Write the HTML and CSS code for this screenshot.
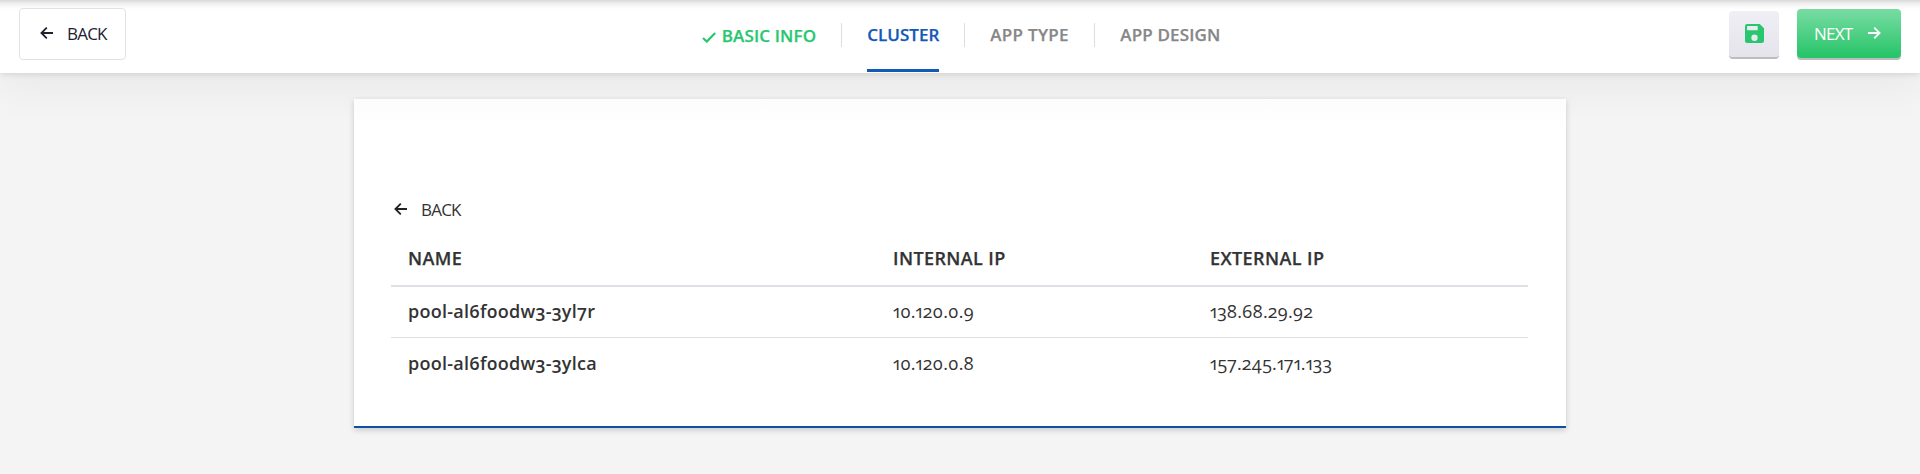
FILE: index.html
```html
<!DOCTYPE html>
<html lang="en">
<head>
<meta charset="utf-8">
<title>Cluster</title>
<link rel="stylesheet" href="styles.css">
</head>
<body>
<header class="topbar">
  <button class="btn btn-back"><svg class="arrow" viewBox="0 0 13 12"><path d="M13 6H1.5M6.800 .6L1.400 6l5.400 5.400"/></svg><span class="label">BACK</span></button>
  <nav class="steps">
    <a class="step done"><svg class="check" viewBox="0 0 14 11"><path d="M1 6l3.8 3.6L13.2 1"/></svg><span>BASIC INFO</span></a>
    <a class="step active"><span>CLUSTER</span></a>
    <a class="step type"><span>APP TYPE</span></a>
    <a class="step design"><span>APP DESIGN</span></a>
  </nav>
  <div class="actions">
    <button class="btn btn-save" aria-label="Save"><svg class="disk" viewBox="3 3 18 18"><path d="M17 3H5a2 2 0 0 0-2 2v14a2 2 0 0 0 2 2h14a2 2 0 0 0 2-2V7zm-5 16a3 3 0 1 1 0-6 3 3 0 0 1 0 6zm3-10H5V5h10z"/></svg></button>
    <button class="btn btn-next"><span class="label">NEXT</span><svg class="arrow" viewBox="0 0 13 12"><path d="M0 6h11.5M6.200 .6l5.400 5.400-5.400 5.400"/></svg></button>
  </div>
</header>
<main class="card">
  <a class="back-link"><svg class="arrow" viewBox="0 0 13 12"><path d="M13 6H1.5M6.800 .6L1.400 6l5.400 5.400"/></svg><span class="label">BACK</span></a>
  <table class="nodes">
    <colgroup><col class="col-name"><col class="col-internal"><col class="col-external"></colgroup>
    <thead><tr><th>NAME</th><th>INTERNAL IP</th><th>EXTERNAL IP</th></tr></thead>
    <tbody>
      <tr><td class="name">pool-al6f0odw3-3yl7r</td><td>10.120.0.9</td><td>138.68.29.92</td></tr>
      <tr><td class="name">pool-al6f0odw3-3ylca</td><td>10.120.0.8</td><td>157.245.171.133</td></tr>
    </tbody>
  </table>
</main>
</body>
</html>
```
FILE: styles.css
```css
* { box-sizing: border-box; }
body {
  margin: 0;
  height: 474px;
  overflow: hidden;
  background: #f4f4f4;
  color: #333;
  font-family: "Open Sans", "Noto Sans", sans-serif;
  font-size: 17px;
}
svg { display: block; fill: none; stroke: currentColor; stroke-width: 1.8; flex: none; }
.topbar {
  height: 73px;
  display: grid;
  grid-template-columns: 1fr auto 1fr;
  padding: 0 19px;
  background: linear-gradient(#d9d9d9, #f2f2f2 4px, #fff 9px);
  box-shadow: 0 1px 6px rgba(0, 0, 0, .12), 0 14px 44px rgba(0, 0, 0, .05);
}
.btn {
  display: flex;
  align-items: center;
  border: 0;
  border-radius: 4px;
  font: inherit;
  padding: 0;
}
.label { letter-spacing: -.8px; white-space: nowrap; line-height: 24px; }
.arrow { width: 13px; height: 12px; }
.btn-back {
  width: 107px;
  height: 52px;
  margin-top: 8px;
  padding: 0 0 0 20px;
  gap: 14px;
  border: 1px solid #e2e2e2;
  background: #fff;
  color: #212130;
}
.btn-back .arrow { margin-bottom: 2px; }
.steps { display: flex; height: 73px; padding-left: 2px; font-weight: 600; color: #878787; -webkit-text-stroke: .25px; }
.step {
  display: flex;
  padding-top: 23px;
  line-height: 24px;
  white-space: nowrap;
}
.step + .step::before {
  content: "";
  width: 1px;
  height: 24px;
  margin: 0 25px;
  background: #ddd;
}
.done { color: #28c76f; padding-top: 24px; gap: 6px; letter-spacing: .15px; }
.check { width: 14px; height: 11px; margin-top: 8px; stroke-width: 2.2; }
.active { color: #1259b8; }
.active span { width: 72px; height: 49px; border-bottom: 3px solid #1259b8; }
.type { letter-spacing: .3px; }
.design span { width: 100px; letter-spacing: .15px; }
.type span { width: 79px; }
.actions { display: flex; justify-content: flex-end; gap: 18px; padding-top: 9px; }
.btn-save {
  width: 50px;
  height: 46px;
  margin-top: 2px;
  justify-content: center;
  background: linear-gradient(#f0eff5, #e5e3eb);
  box-shadow: 0 2px 0 #bcbcbf;
  color: #28c76f;
}
.disk { width: 19px; height: 19px; margin-bottom: 1px; fill: currentColor; stroke: none; }
.btn-next {
  width: 104px;
  height: 49px;
  padding-left: 17px;
  gap: 16px;
  background: linear-gradient(#79dca3, #25c467);
  box-shadow: 0 2px 0 #b9bdbb;
  color: #fff;
}
.btn-next .arrow { margin-bottom: 2px; }
.card {
  position: relative;
  width: 1212px;
  height: 329px;
  margin: 26px auto 0;
  padding: 98px 38px 0 37px;
  border-bottom: 2px solid #0f50a5;
  background: linear-gradient(#fcfcfc, #fff 30px);
  box-shadow: 0 2px 6px rgba(0, 0, 0, .18);
}
.back-link { display: flex; align-items: center; height: 26px; padding-left: 3px; gap: 14px; }
.back-link .arrow { margin-bottom: 2px; stroke: #222; }
.nodes { width: 100%; table-layout: fixed; border-collapse: separate; border-spacing: 0; }
.col-name { width: 485px; }
.col-internal { width: 317px; }
th, td { padding: 0 16px 0 17px; text-align: left; font-size: 18px; white-space: nowrap; }
th {
  height: 64px;
  padding-top: 8px;
  border-bottom: 2px solid #dde1e5;
  font-weight: 600;
  -webkit-text-stroke: .25px;
  letter-spacing: .4px;
}
td {
  height: 51px;
  padding-bottom: 2px;
  letter-spacing: .1px;
  font-variant-numeric: oldstyle-nums proportional-nums;
}
tbody tr:first-child td { border-bottom: 1px solid #dee0e2; }
td.name { font-weight: 600; letter-spacing: .27px; }
```
